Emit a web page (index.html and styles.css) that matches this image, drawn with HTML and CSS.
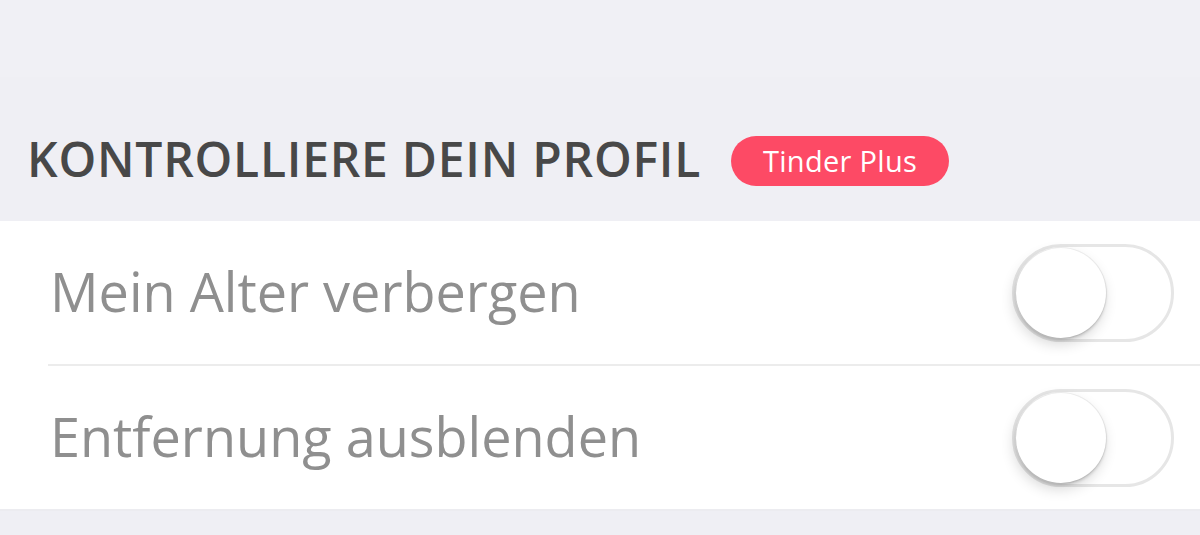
FILE: index.html
```html
<!DOCTYPE html>
<html lang="de">
<head>
    <meta charset="UTF-8">
    <title>Einstellungen</title>
    <link rel="stylesheet" href="styles.css">
</head>
<body>
    <div class="top-gap"></div>

    <!-- Section heading with the plus badge -->
    <div class="section-head">
        <h2>KONTROLLIERE DEIN PROFIL</h2>
        <span class="badge">Tinder Plus</span>
    </div>

    <!-- Switch rows -->
    <div class="group">
        <div class="row">
            <span class="row-label">Mein Alter verbergen</span>
            <label class="switch">
                <input type="checkbox">
                <span class="knob"></span>
            </label>
        </div>
        <div class="row">
            <span class="row-label">Entfernung ausblenden</span>
            <label class="switch">
                <input type="checkbox">
                <span class="knob"></span>
            </label>
        </div>
    </div>
</body>
</html>
```

FILE: styles.css
```css
body {
    margin: 0;
    padding: 0;
    background: #efeff4;
    font-family: 'Open Sans', 'Lato', sans-serif;
    height: 535px;
    overflow: hidden;
}

.top-gap {
    height: 77px;
    background: #f0f0f5;
}

.section-head {
    height: 144px;
    display: flex;
    align-items: center;
    padding: 18px 0 0 27px;
    box-sizing: border-box;
    gap: 30px;
}

.section-head h2 {
    margin: 0;
    font-size: 48px;
    font-weight: 600;
    color: #484848;
    letter-spacing: 0.75px;
}

.badge {
    background: #fd4a65;
    color: #fff;
    width: 218px;
    height: 50px;
    line-height: 50px;
    text-align: center;
    border-radius: 25px;
    font-size: 29px;
    font-weight: 500;
    letter-spacing: 0.3px;
    margin-top: 6px;
}

.group {
    background: #fff;
    border-bottom: 2px solid #ececf0;
}

.row {
    height: 143px;
    display: flex;
    align-items: center;
    justify-content: space-between;
    margin-left: 48px;
    padding-right: 26px;
}

.row + .row {
    border-top: 2px solid #ececec;
}

.row-label {
    font-size: 54px;
    color: #8f8f8f;
    margin-left: 2px;
    margin-top: -4px;
}

.switch {
    position: relative;
    width: 162px;
    height: 98px;
    cursor: pointer;
}

.switch input {
    display: none;
}

.knob {
    display: block;
    width: 156px;
    height: 92px;
    border: 3px solid #e6e6e6;
    border-radius: 49px;
    background: #fff;
}

.knob::before {
    content: "";
    position: absolute;
    left: 4px;
    top: 4px;
    width: 90px;
    height: 90px;
    border-radius: 50%;
    background: #fff;
    box-shadow: 0 0 0 1px rgba(0, 0, 0, 0.05), -2px 6px 14px rgba(0, 0, 0, 0.16), 0 2px 3px rgba(0, 0, 0, 0.16);
}

.switch input:checked + .knob {
    background: #4cd964;
    border-color: #4cd964;
}

.switch input:checked + .knob::before {
    left: 68px;
}
```
